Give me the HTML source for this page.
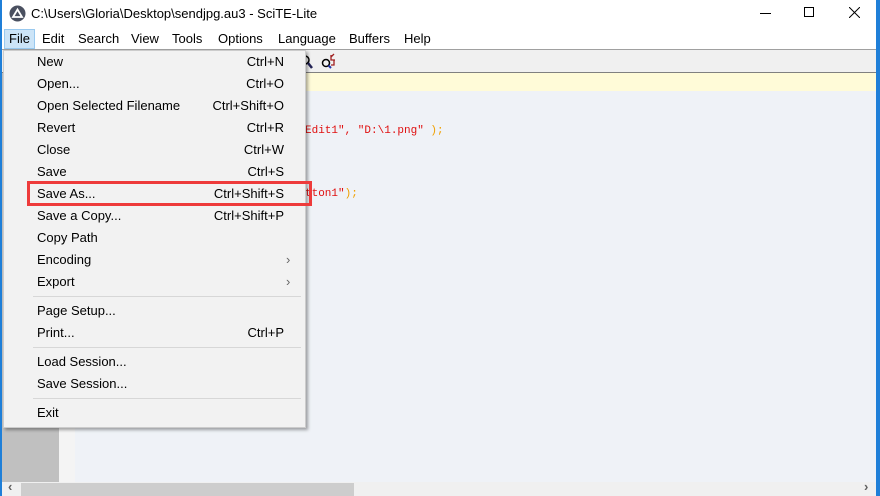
<!DOCTYPE html>
<html><head><meta charset="utf-8"><style>
*{margin:0;padding:0;box-sizing:border-box}
body{width:880px;height:496px;overflow:hidden;background:#fff;font-family:"Liberation Sans",sans-serif;font-size:13px;color:#000;position:relative}
.a{position:absolute}
.mi{position:absolute;left:37px;height:22px;line-height:24px;white-space:nowrap}
.sc{position:absolute;right:22px;height:22px;line-height:24px;text-align:right}
.arr{position:absolute;left:286px;height:22px;line-height:24px;color:#666}
.sep{position:absolute;left:33px;width:268px;height:1px;background:#d7d7d7}
.code{font-family:"Liberation Mono",monospace;font-size:11px;color:#e01010}
</style></head><body>
<div class="a" style="left:0;top:0;width:2px;height:496px;background:#1f7fd8"></div>
<div class="a" style="left:876px;top:0;width:4px;height:496px;background:#1f7fd8"></div>
<div class="a" style="left:2px;top:0;width:874px;height:28px;background:#fff"></div>
<svg class="a" style="left:9px;top:5px" width="17" height="17"><circle cx="8.5" cy="8.5" r="8" fill="#4a5060"/><path d="M4 12 L8.5 4.5 L13 12 Z" fill="none" stroke="#fff" stroke-width="1.8"/></svg>
<div class="a" style="left:31px;top:6px;font-size:13px">C:\Users\Gloria\Desktop\sendjpg.au3 - SciTE-Lite</div>
<div class="a" style="left:760px;top:13px;width:11px;height:1px;background:#000"></div>
<div class="a" style="left:804px;top:7px;width:10px;height:10px;border:1px solid #000"></div>
<svg class="a" style="left:849px;top:7px" width="11" height="11"><path d="M0 0L11 11M11 0L0 11" stroke="#000" stroke-width="1"/></svg>
<div class="a" style="left:2px;top:28px;width:874px;height:22px;background:#fff"></div>
<div class="a" style="left:4px;top:29px;width:31px;height:20px;background:#cce4f7;border:1px solid #99c9ef"></div>
<div class="a" style="top:31px;left:9px">File</div>
<div class="a" style="top:31px;left:42px">Edit</div>
<div class="a" style="top:31px;left:78px">Search</div>
<div class="a" style="top:31px;left:131px">View</div>
<div class="a" style="top:31px;left:172px">Tools</div>
<div class="a" style="top:31px;left:218px">Options</div>
<div class="a" style="top:31px;left:278px">Language</div>
<div class="a" style="top:31px;left:349px">Buffers</div>
<div class="a" style="top:31px;left:404px">Help</div>
<div class="a" style="left:2px;top:49px;width:874px;height:1px;background:#a0a0a0"></div>
<div class="a" style="left:2px;top:50px;width:874px;height:23px;background:#f0f0f0"></div>
<svg class="a" style="left:300px;top:54px" width="14" height="16"><circle cx="5" cy="6" r="4" fill="none" stroke="#000" stroke-width="1.5"/><path d="M8 9L12 14" stroke="#225" stroke-width="2.5"/></svg>
<svg class="a" style="left:320px;top:52px" width="18" height="18"><circle cx="6" cy="11" r="3.5" fill="none" stroke="#000" stroke-width="1.5"/><path d="M8.5 13.5L11 16" stroke="#23a" stroke-width="2"/><path d="M11 3v5h4M14 2l-3 3M14 8v5h-3" stroke="#a02020" stroke-width="1.3" fill="none"/></svg>
<div class="a" style="left:2px;top:72px;width:874px;height:1px;background:#808080"></div>
<div class="a" style="left:2px;top:73px;width:874px;height:409px;background:#eff2f7"></div>
<div class="a" style="left:2px;top:73px;width:57px;height:409px;background:#c0c0c0"></div>
<div class="a" style="left:59px;top:73px;width:16px;height:409px;background:#f4f4f4"></div>
<div class="a" style="left:75px;top:73px;width:801px;height:18px;background:#fffbd8"></div>
<div class="a code" style="left:305px;top:125px">Edit1", "D:\1.png" <span style="color:#f0a000">);</span></div>
<div class="a code" style="left:305px;top:188px">tton1"<span style="color:#f0a000">);</span></div>
<div class="a" style="left:2px;top:482px;width:874px;height:14px;background:#f0f0f0"></div>
<div class="a" style="left:21px;top:483px;width:333px;height:13px;background:#cdcdcd"></div>
<div class="a" style="left:8px;top:479px;color:#606060;font-size:13px;font-weight:bold">‹</div>
<div class="a" style="left:864px;top:479px;color:#606060;font-size:13px;font-weight:bold">›</div>
<div class="a" style="left:3px;top:50px;width:303px;height:378px;background:#f2f2f2;border:1px solid #ccc;box-shadow:2px 2px 3px rgba(0,0,0,.35)"></div>
<div class="mi" style="top:50px">New</div><div class="sc" style="top:50px;left:0;width:284px">Ctrl+N</div>
<div class="mi" style="top:72px">Open...</div><div class="sc" style="top:72px;left:0;width:284px">Ctrl+O</div>
<div class="mi" style="top:94px">Open Selected Filename</div><div class="sc" style="top:94px;left:0;width:284px">Ctrl+Shift+O</div>
<div class="mi" style="top:116px">Revert</div><div class="sc" style="top:116px;left:0;width:284px">Ctrl+R</div>
<div class="mi" style="top:138px">Close</div><div class="sc" style="top:138px;left:0;width:284px">Ctrl+W</div>
<div class="mi" style="top:160px">Save</div><div class="sc" style="top:160px;left:0;width:284px">Ctrl+S</div>
<div class="mi" style="top:182px">Save As...</div><div class="sc" style="top:182px;left:0;width:284px">Ctrl+Shift+S</div>
<div class="mi" style="top:204px">Save a Copy...</div><div class="sc" style="top:204px;left:0;width:284px">Ctrl+Shift+P</div>
<div class="mi" style="top:226px">Copy Path</div>
<div class="mi" style="top:248px">Encoding</div><div class="arr" style="top:248px">›</div>
<div class="mi" style="top:270px">Export</div><div class="arr" style="top:270px">›</div>
<div class="sep" style="top:296px"></div>
<div class="mi" style="top:299px">Page Setup...</div>
<div class="mi" style="top:321px">Print...</div><div class="sc" style="top:321px;left:0;width:284px">Ctrl+P</div>
<div class="sep" style="top:347px"></div>
<div class="mi" style="top:350px">Load Session...</div>
<div class="mi" style="top:372px">Save Session...</div>
<div class="sep" style="top:398px"></div>
<div class="mi" style="top:401px">Exit</div>
<div class="a" style="left:27px;top:181px;width:285px;height:25px;border:3px solid #ee3b3b"></div>
</body></html>
